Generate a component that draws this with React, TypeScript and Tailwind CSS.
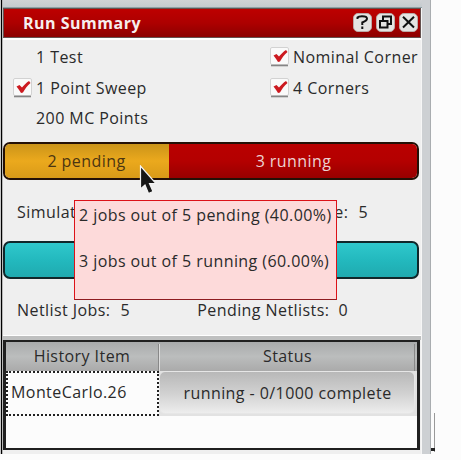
import React from "react";

function Check() {
  return (
    <svg width="19" height="20" viewBox="0 0 19 20" className="mb-[2px] shrink-0">
      <rect x="0.5" y="0.5" width="18" height="17" rx="1.5" fill="#fafafa" stroke="#d2d2d2" />
      <path d="M1 18.5H18" stroke="#858585" strokeWidth="1.6" />
      <path d="M3.5 8.5 6.5 7 9 9.5C11 7 13.5 4.5 16 3L17.5 5C14 8 12 11 10 14.5L8 15C6.5 12.5 5.5 11 3.5 8.5Z" fill="#cc1a20" />
    </svg>
  );
}

function TitleIcon({ kind }: { kind: "help" | "restore" | "close" }) {
  return (
    <svg width="19" height="19" viewBox="0 0 19 19" className="shrink-0">
      <rect x="0.5" y="0.5" width="18" height="18" rx="4.5" fill="#e4e4e2" stroke="#bcaaa8" />
      <g fill="none" stroke="#111" strokeWidth="2">
        {kind === "help" && <path d="M4.5 6V4.5Q5.5 3.3 9 3.3Q14 3.3 14 5.7Q14 7.5 9.3 9.5V12M9.3 13.5V16" />}
        {kind === "restore" && (
          <>
            <path d="M7 8V3.5H15V11H12" />
            <path d="M4 8H11.5V14.5H4Z" />
          </>
        )}
        {kind === "close" && <path d="M4 3.8 15 14.5M15 3.8 4 14.5" />}
      </g>
    </svg>
  );
}

export default function App() {
  return (
    <div className="relative flex h-[460px] w-[461px] overflow-hidden bg-[#fcfcfc] font-['Open_Sans','Noto_Sans',sans-serif] text-[16px] leading-[22px] tracking-[0.43px] whitespace-nowrap text-[#2a2a2a]">
      <div className="flex h-[454px] w-[431px] border-r border-[#a9adb0] bg-[#cdd0d3]">
        <div className="h-full w-[3px] shrink-0 border-x border-l-[#c8c8c8] border-r-[#b8b8b8] bg-black" />
        <div className="flex w-[419px] shrink-0 flex-col border-r border-[#f6f6f6] bg-[#efefef]">
          <div className="-mr-px h-2 shrink-0 border-b border-[#8da0a5] bg-linear-to-b from-[#d0d2d5] to-[#c5cbce]" />
          <header className="flex h-[30px] shrink-0 items-center border border-[#65514f] bg-linear-to-b from-[#bd0000] via-[#ad0000] to-[#8c0000] pr-[2px] pl-[19px]">
            <h1 className="w-[122px] font-bold tracking-[0.5px] text-[#f6eeee]">Run Summary</h1>
            <div className="ml-auto flex gap-1 pb-[2px]">
              <TitleIcon kind="help" />
              <TitleIcon kind="restore" />
              <TitleIcon kind="close" />
            </div>
          </header>
          <section className="flex h-[104px] shrink-0 border-t-2 border-white pt-[2px] leading-[31px]">
            <div className="w-[267px] pl-[10px]">
              <div className="flex h-[31px] items-center pl-[23px]">1 Test</div>
              <div className="flex h-[31px] items-center gap-[4px]"><Check /><span className="-mt-px">1 Point Sweep</span></div>
              <div className="-mt-px flex h-[31px] items-center pl-[23px]">200 MC Points</div>
            </div>
            <div>
              <div className="flex h-[31px] items-center gap-[4px]"><Check /><span>Nominal Corner</span></div>
              <div className="flex h-[31px] items-center gap-[4px]"><Check /><span className="-mt-px">4 Corners</span></div>
            </div>
          </section>
          <div className="flex h-[38px] w-[416px] shrink-0 overflow-hidden rounded-[7px] border-2 border-[#241006] leading-[34px]">
            <div className="w-[164px] bg-linear-to-b from-[#cb9419] via-[#eba91d] to-[#d99a18] pr-px text-center text-[#4c3511]">2 pending</div>
            <div className="flex-1 bg-linear-to-b from-[#b90000] via-[#b40000] to-[#980000] pl-px text-center text-[#ecd3d3]">3 running</div>
          </div>
          <div className="flex h-[61px] shrink-0 pt-[21px] pl-[14px]">
            <span>Simulat</span>
            <span className="ml-auto">e:</span>
            <span className="mr-[53px] ml-[10px]">5</span>
          </div>
          <div className="h-[38px] w-[416px] shrink-0 rounded-[7px] border-2 border-[#10272a] bg-linear-to-b from-[#2fc8cc] via-[#23b9be] to-[#1faaaf]" />
          <div className="flex h-[56px] shrink-0 pt-[20px] pl-[14px]">
            <span>Netlist Jobs:</span><span className="ml-[10px]">5</span>
            <span className="ml-auto">Pending Netlists:</span><span className="mr-[73px] ml-[9px]">0</span>
          </div>
          <div className="h-[5px] shrink-0 border-t border-white bg-[#bfc0c0]" />
          <div className="flex h-[110px] w-[417px] shrink-0 flex-col border-[3px] border-t-2 border-b-2 border-[#202020] bg-[#fcfcfc]">
            <div className="flex h-[29px] shrink-0 bg-linear-to-b from-[#a9abac] via-[#bbbdbd] to-[#aaa] pt-[2px] leading-[25px]">
              <div className="w-[153px] border-r border-[#888] text-center">History Item</div>
              <div className="w-[256px] border-r border-[#888] border-l border-l-[#ddd] pl-px text-center">Status</div>
            </div>
            <div className="flex h-[45px] shrink-0">
              <div className="w-[153px] border-2 border-dotted border-[#222] pl-[3px] leading-[38px]">MonteCarlo.26</div>
              <div className="w-[258px] bg-[#e2e2e2] pr-[2px]">
                <div className="h-[43px] rounded-md border border-[#e6e6e6] bg-linear-to-b from-[#b8b8b8] via-[#d0d0d0] to-[#ededed] pl-px text-center leading-[43px]">running - 0/1000 complete</div>
              </div>
            </div>
          </div>
        </div>
      </div>
      <div className="absolute top-[200px] left-[74px] h-[100px] w-[263px] border-[1.5px] border-[#dc1218] border-b-[#8e1c20] bg-[#fddada] pl-[4px] leading-[23px]">
        <p className="pt-[3px]">2 jobs out of 5 pending (40.00%)</p>
        <p className="pt-[23px]">3 jobs out of 5 running (60.00%)</p>
      </div>
      <svg className="absolute top-[165px] left-[139px]" width="18" height="31" viewBox="0 0 18 31">
        <path d="M1.5 1V24L6 20 9.5 28.5 14 26.5 10.5 18.5H17Z" fill="#171717" stroke="#f4f4f4" strokeWidth="1.2" />
      </svg>
      <div className="absolute top-[413px] left-[434px] h-[39px] w-px bg-[#999]" />
      <div className="absolute top-[448px] left-[431px] h-[3px] w-[4px] bg-[#222]" />
    </div>
  );
}
